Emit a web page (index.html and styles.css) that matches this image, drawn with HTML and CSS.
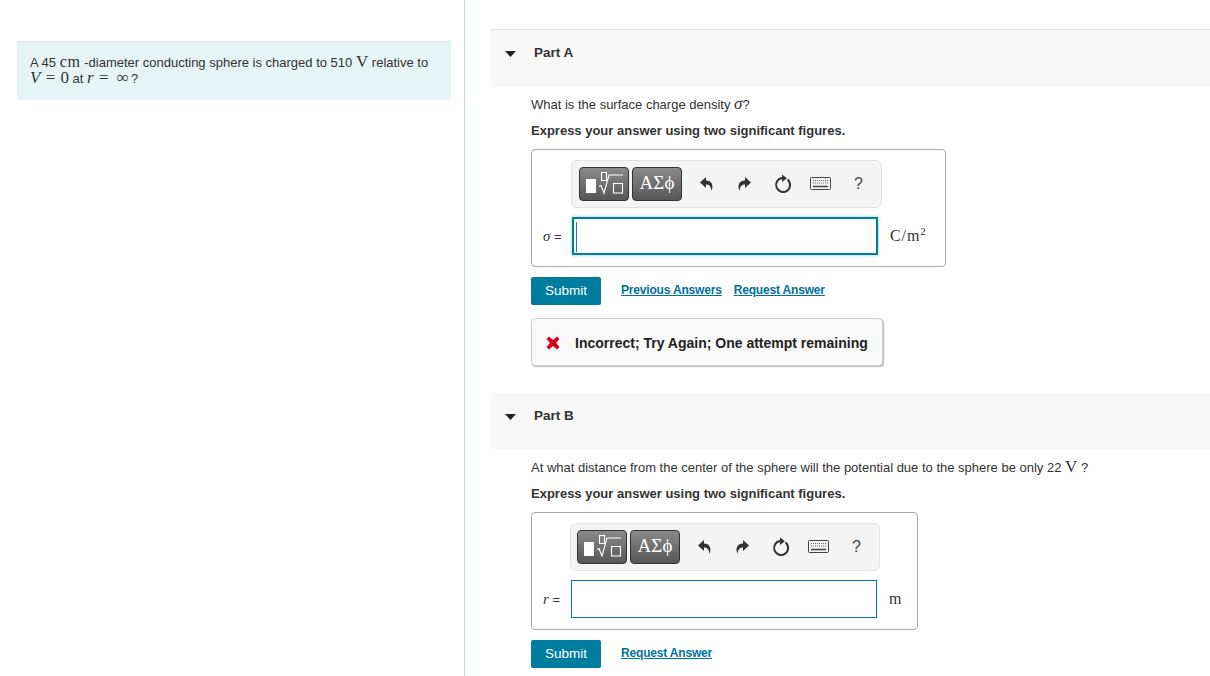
FILE: index.html
```html
<!DOCTYPE html>
<html lang="en">
<head>
<meta charset="utf-8">
<title>Part A and Part B</title>
<link rel="stylesheet" href="styles.css">
</head>
<body>
<div class="page">
  <aside class="left">
    <div class="problem">A 45 <span class="m cm">cm</span> -diameter conducting sphere is charged to 510 <span class="m big">V</span> relative to<br><span class="m big eq"><i>V</i> = 0</span> at <span class="m big eq"><i>r</i> = <span class="inf">∞</span></span>?</div>
  </aside>
  <main class="right">
    <section class="part">
      <header class="part-head first"><svg class="caret" width="12" height="6" viewBox="0 0 12 6"><path d="M0 0h11L5.500 6z"/></svg><span>Part A</span></header>
      <div class="part-body">
        <p class="q">What is the surface charge density <i class="m sig">σ</i>?</p>
        <p class="hint">Express your answer using two significant figures.</p>
        <div class="answer a1">
          <div class="toolbar">
            <div class="tb-btn tmpl"><svg width="44" height="26" viewBox="0 0 44 26"><rect x="4" y="8" width="10" height="14" fill="#fff"/><g fill="none" stroke="#fff" stroke-width="1.100"><rect x="19.500" y="1.500" width="5" height="8"/><rect x="31.500" y="12.500" width="9" height="9.500"/><path d="M17 15.500l2-1 3 7.500 5-18h14"/></g></svg></div>
            <div class="tb-btn sym">ΑΣϕ</div>
            <div class="tools">
              <svg class="t" width="14" height="14" viewBox="0 0 14 14"><path d="M6 0L0 5.500 6 11V7.500c3 0 5 1.500 5.500 6.500C14 8 11.500 3.500 6 3.500z" fill="#333"/></svg>
              <svg class="t" width="14" height="14" viewBox="0 0 14 14"><path d="M8 0l6 5.500L8 11V7.500c-3 0-5 1.500-5.500 6.500C0 8 2.500 3.500 8 3.500z" fill="#333"/></svg>
              <svg class="t" width="18" height="20" viewBox="0 0 18 20"><path d="M13.500 5.600A7 7 0 1 1 8 4.100" fill="none" stroke="#333" stroke-width="2"/><path d="M8 .5V8l5-3.800z" fill="#333"/></svg>
              <svg class="t" width="21" height="13" viewBox="0 0 21 13"><rect x=".5" y=".5" width="20" height="12" rx="1" fill="#f2f2f2" stroke="#444"/><path d="M3 3.500h15M3 6h15" stroke="#666" stroke-width="1.200" stroke-dasharray="1 1"/><path d="M3 9.500h15" stroke="#444" stroke-width="1.500"/></svg>
              <span class="help">?</span>
            </div>
          </div>
          <div class="row">
            <label class="lbl"><i class="m">σ</i> =</label>
            <div class="input focus"><span class="cursor"></span></div>
            <span class="unit m">C/m<sup>2</sup></span>
          </div>
        </div>
        <div class="actions">
          <button class="submit" type="button">Submit</button>
          <a class="lnk" href="#">Previous Answers</a>
          <a class="lnk" href="#">Request Answer</a>
        </div>
        <div class="feedback">
          <svg width="14" height="14" viewBox="0 0 14 14"><path d="M3 .5L7 4 11 .5 13.500 3 10 7l3.500 4-2.500 2.500L7 10l-4 3.500L.5 11 4 7 .5 3z" fill="#d6001c"/></svg>
          <span>Incorrect; Try Again; One attempt remaining</span>
        </div>
      </div>
    </section>
    <section class="part second">
      <header class="part-head"><svg class="caret" width="12" height="6" viewBox="0 0 12 6"><path d="M0 0h11L5.500 6z"/></svg><span>Part B</span></header>
      <div class="part-body">
        <p class="q">At what distance from the center of the sphere will the potential due to the sphere be only 22 <span class="m big">V</span> ?</p>
        <p class="hint">Express your answer using two significant figures.</p>
        <div class="answer a2">
          <div class="toolbar">
            <div class="tb-btn tmpl"><svg width="44" height="26" viewBox="0 0 44 26"><rect x="4" y="8" width="10" height="14" fill="#fff"/><g fill="none" stroke="#fff" stroke-width="1.100"><rect x="19.500" y="1.500" width="5" height="8"/><rect x="31.500" y="12.500" width="9" height="9.500"/><path d="M17 15.500l2-1 3 7.500 5-18h14"/></g></svg></div>
            <div class="tb-btn sym">ΑΣϕ</div>
            <div class="tools">
              <svg class="t" width="14" height="14" viewBox="0 0 14 14"><path d="M6 0L0 5.500 6 11V7.500c3 0 5 1.500 5.500 6.500C14 8 11.500 3.500 6 3.500z" fill="#333"/></svg>
              <svg class="t" width="14" height="14" viewBox="0 0 14 14"><path d="M8 0l6 5.500L8 11V7.500c-3 0-5 1.500-5.500 6.500C0 8 2.500 3.500 8 3.500z" fill="#333"/></svg>
              <svg class="t" width="18" height="20" viewBox="0 0 18 20"><path d="M13.500 5.600A7 7 0 1 1 8 4.100" fill="none" stroke="#333" stroke-width="2"/><path d="M8 .5V8l5-3.800z" fill="#333"/></svg>
              <svg class="t" width="21" height="13" viewBox="0 0 21 13"><rect x=".5" y=".5" width="20" height="12" rx="1" fill="#f2f2f2" stroke="#444"/><path d="M3 3.500h15M3 6h15" stroke="#666" stroke-width="1.200" stroke-dasharray="1 1"/><path d="M3 9.500h15" stroke="#444" stroke-width="1.500"/></svg>
              <span class="help">?</span>
            </div>
          </div>
          <div class="row">
            <label class="lbl"><i class="m">r</i> =</label>
            <div class="input"></div>
            <span class="unit m">m</span>
          </div>
        </div>
        <div class="actions">
          <button class="submit" type="button">Submit</button>
          <a class="lnk" href="#">Request Answer</a>
        </div>
      </div>
    </section>
  </main>
</div>
</body>
</html>
```
FILE: styles.css
```css
html, body { margin: 0; padding: 0; background: #fff; }
body { font-family: "Liberation Sans", Arial, sans-serif; font-size: 13px; color: #333; }
.page { display: flex; width: 1210px; height: 676px; overflow: hidden; }
.left { box-sizing: border-box; width: 465px; flex: none; border-right: 1px solid #c3d6e6; padding: 41px 13px 0 17px; }
.problem { box-sizing: border-box; height: 59px; background: #e5f5f6; border-top: 1px solid #d8e6e8; padding: 13px 13px 0; line-height: 16px; }
.m { font-family: "Liberation Serif", "Times New Roman", serif; font-size: 15px; color: #333; line-height: 0; }
.cm { font-size: 16px; letter-spacing: .7px; }
.big { font-size: 17px; }
.eq { word-spacing: 1px; }
.sig { font-size: 17px; }
.inf { font-size: 17px; line-height: 0; margin: 0 2px 0 3px; }
.right { flex: 1; padding: 29px 0 0 26px; min-width: 0; }
.second { margin-top: 27px; }
.part-head { box-sizing: border-box; height: 56px; background: #f8f8f8; display: flex; align-items: flex-start; padding: 15px 0 0 14px; font-size: 13.500px; font-weight: 700; color: #333; line-height: 16px; }
.part-head.first { height: 58px; border-top: 1px solid #e2e2e2; }
.part-head span { margin-left: 17px; }
.caret { margin-top: 6px; fill: #222; }
.part-body { padding: 0 0 0 40px; }
.q { margin: 0; padding-top: 10px; line-height: 16px; height: 16px; }
.second .q { padding-top: 11px; }
.hint { margin: 10px 0 0; line-height: 16px; font-weight: 700; }
.answer { box-sizing: border-box; margin-top: 10px; border: 1px solid #aaa; border-radius: 4px; padding: 10px 0 0 39px; }
.a1 { width: 415px; height: 118px; }
.a2 { width: 387px; height: 118px; }
.toolbar { box-sizing: border-box; width: 311px; height: 48px; display: flex; align-items: center; background: #f4f4f4; border: 1px solid #e2e2e2; border-radius: 6px; padding: 0 0 1px 7px; gap: 3px; }
.a2 .toolbar { width: 310px; margin-left: -1px; padding-left: 6px; }
.tb-btn { box-sizing: border-box; width: 50px; height: 34px; border: 1px solid #333; border-radius: 4px; background: linear-gradient(#8a8a8a, #565656); display: flex; align-items: center; justify-content: center; color: #fff; }
.sym { font-family: "Liberation Serif", serif; font-size: 19px; padding-bottom: 1px; }
.tools { display: flex; align-items: center; margin-left: 13px; }
.t { flex: none; }
.t:nth-child(1) { margin-left: 2px; }
.t:nth-child(2) { margin-left: 23px; }
.t:nth-child(3) { margin-left: 23px; }
.t:nth-child(4) { margin-left: 18px; }
.help { margin-left: 23px; font-size: 16px; color: #444; }
.row { display: flex; align-items: center; margin: 9px 0 0 1px; }
.a2 .row { margin-left: 0; }
.lbl { box-sizing: border-box; width: 40px; margin-left: -40px; padding-left: 11px; font-size: 13px; white-space: nowrap; }
.a2 .lbl { margin-left: -39px; width: 39px; }
.lbl .m { font-size: 15px; }
.input { box-sizing: border-box; width: 306px; height: 38px; border: 1px solid #007c9e; background: #fff; flex: none; padding: 3px; }
.input.focus { border-width: 2px; padding: 2px 1px; box-shadow: 0 0 3px #7fc4d6; }
.cursor { display: block; width: 1px; height: 30px; background: #2f6fc0; margin: 1px 0 0 1px; }
.unit { margin-left: 12px; font-size: 16px; letter-spacing: .9px; }
.a1 .unit { margin-bottom: 5px; }
.unit sup { font-size: 11px; line-height: 0; }
.actions { display: flex; align-items: center; margin-top: 10px; height: 28px; }
.submit { box-sizing: border-box; width: 70px; height: 28px; border: 0; border-radius: 2px; background: #007c9e; color: #fff; font: 13.500px "Liberation Sans", Arial, sans-serif; padding: 0 0 2px; }
.lnk { margin-left: 12px; color: #00729b; font-size: 12px; font-weight: 700; letter-spacing: -.18px; text-decoration: underline; position: relative; top: -1px; }
.submit + .lnk { margin-left: 20px; }
.feedback { box-sizing: border-box; width: 352px; height: 48px; margin-top: 13px; display: flex; align-items: center; background: #f9f9f9; border: 1px solid #ccc; border-radius: 4px; box-shadow: 1px 1px 1px #bbb; padding: 1px 0 0 14px; font-size: 14px; font-weight: 700; color: #222; }
.feedback span { margin-left: 15px; }
```
